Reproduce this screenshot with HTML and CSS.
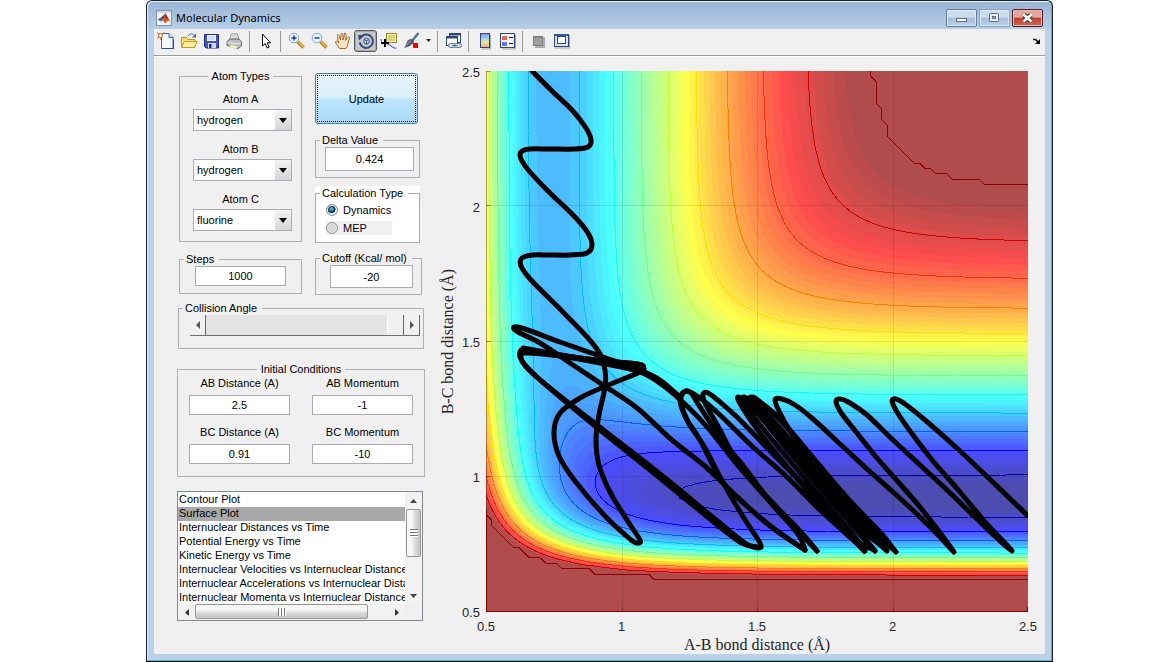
FILE: index.html
```html
<!DOCTYPE html>
<html lang="en">
<head>
<meta charset="utf-8">
<title>Molecular Dynamics</title>
<link rel="stylesheet" href="styles.css">
</head>
<body>
<main class="window">
  <header class="titlebar">
    <svg class="app-icon" viewBox="0 0 16 16" width="16" height="16" aria-hidden="true">
      <rect x=".5" y=".5" width="15" height="15" fill="#eef2f8" stroke="#8a93a3"/>
      <rect x="1" y="1" width="14" height="2" fill="#c9d8ea"/>
      <path d="M1.500 9.500 5 7.500 7 9 5 11.500z" fill="#3c6ea8"/>
      <path d="M5 7.500 9.500 3.500 8.500 8 6.500 9.500z" fill="#5b4a55"/>
      <path d="M9.500 3 14.500 12 12 10.500 9 13.500 7.500 10.500 5 11.500 8 8z" fill="#d9531e"/>
      <path d="M9.500 3 12 9 9.500 8z" fill="#8c2a12"/>
    </svg>
    <h1 class="title">Molecular Dynamics</h1>
    <div class="captions">
      <button class="caption" type="button" aria-label="Minimize"><svg viewBox="0 0 28 16" width="28" height="16"><rect x="9.500" y="8.500" width="10" height="3" fill="#fff" stroke="#5d6b7b"/></svg></button>
      <button class="caption caption-max" type="button" aria-label="Maximize"><svg viewBox="0 0 28 16" width="28" height="16"><rect x="9.500" y="3.500" width="9" height="8" rx="1" fill="#e8eef6" stroke="#5d6b7b"/><rect x="12.500" y="6.500" width="3" height="2" fill="#a9c0dc" stroke="#5d6b7b"/></svg></button>
      <button class="caption caption-close" type="button" aria-label="Close"><svg viewBox="0 0 28 16" width="28" height="16"><path d="M11 5l7 6M18 5l-7 6" stroke="#5e3a42" stroke-width="5"/><path d="M10.500 4.500l8 7M18.500 4.500l-8 7" stroke="#fff" stroke-width="2.600"/></svg></button>
    </div>
  </header>

  <div class="client">
    <nav class="toolbar" aria-label="Figure toolbar">
      <button class="tool" type="button" aria-label="New figure"><svg viewBox="0 0 18 18" width="18" height="18"><path d="M4.500 1.500H12l4 4v11H4.500z" fill="#f2f7ff" stroke="#4a66a0"/><path d="M12 1.500v4h4" fill="#cfdcf2" stroke="#4a66a0"/><path d="M5 16.500h11.500V7" fill="none" stroke="#2f4c86"/><circle cx="3.500" cy="3.500" r="2" fill="#fff2a0" stroke="#e0603a"/><path d="M0 .5l2 1.500M7 .5L5.500 2M0 6l2-1M3.500 6.500v1.500" stroke="#e0603a"/></svg></button>
      <button class="tool" type="button" aria-label="Open"><svg viewBox="0 0 18 18" width="18" height="18"><path d="M1.500 15.500V5.500h5l1.500 2h7v8z" fill="#f4dc7c" stroke="#c79a1c"/><path d="M1.500 15.500l3-6h12.500l-2.500 6z" fill="#fff0a0" stroke="#c79a1c"/><path d="M8 4c2-3 5-2.500 6.500-.5" fill="none" stroke="#4a66a0"/><path d="M16 1.500v4h-4z" fill="#4a66a0"/></svg></button>
      <button class="tool" type="button" aria-label="Save"><svg viewBox="0 0 18 18" width="18" height="18"><path d="M1.500 2.500h14v13.500H3l-1.500-1.500z" fill="#4454c4" stroke="#24307c"/><rect x="4" y="3" width="9" height="6" fill="#f4f7ff"/><path d="M5 5h7M5 7h7" stroke="#b5c2e8"/><rect x="5" y="11" width="8" height="5" fill="#d5d9e4"/><rect x="6" y="12" width="2.500" height="4" fill="#24307c"/></svg></button>
      <button class="tool" type="button" aria-label="Print"><svg viewBox="0 0 18 18" width="18" height="18"><path d="M3.500 8l2-6h6l1.500 6z" fill="#fff" stroke="#8a8a8a"/><path d="M6 4h5M5.500 6h6" stroke="#b5b5b5"/><path d="M1 9.500l3-2.500h9l2.500 3v4l-3.500 2.500-11-3z" fill="#bcbcc0" stroke="#666"/><path d="M1.500 10.500l10.500 1.500 3-2" fill="none" stroke="#eee"/><path d="M4 14l7 1.500" stroke="#f5f5c0" stroke-width="2"/></svg></button>
      <span class="divider"></span>
      <button class="tool" type="button" aria-label="Edit plot"><svg viewBox="0 0 18 18" width="18" height="18"><path d="M5.500 2v12l2.700-2.500 2 4.500 2-1-2-4.200h3.300z" fill="#fff" stroke="#000"/></svg></button>
      <span class="divider"></span>
      <button class="tool" type="button" aria-label="Zoom in"><svg viewBox="0 0 18 18" width="18" height="18"><path d="M9.500 9.500l6 6" stroke="#b77b22" stroke-width="3.500"/><path d="M9.500 9l6 6" stroke="#f2c057" stroke-width="1.500"/><circle cx="6" cy="6" r="4.800" fill="#dff1fa" stroke="#8ea5b8"/><path d="M3.500 6h5M6 3.500v5" stroke="#2340a8" stroke-width="1.500"/></svg></button>
      <button class="tool" type="button" aria-label="Zoom out"><svg viewBox="0 0 18 18" width="18" height="18"><path d="M9.500 9.500l6 6" stroke="#b77b22" stroke-width="3.500"/><path d="M9.500 9l6 6" stroke="#f2c057" stroke-width="1.500"/><circle cx="6" cy="6" r="4.800" fill="#dff1fa" stroke="#8ea5b8"/><path d="M3.500 6h5" stroke="#2340a8" stroke-width="1.500"/></svg></button>
      <button class="tool" type="button" aria-label="Pan"><svg viewBox="0 0 18 18" width="18" height="18"><path d="M5.500 16.500C4 13.500 1.500 11.500 1.500 10c.5-1.500 2-.5 3 .8L3.500 4.500c0-1.500 1.700-1.500 2 0L6.500 8 7 2.500c.2-1.500 2-1.500 2 0V8l1.500-5c.5-1.500 2-1 1.800.5L11.500 8.500l2.300-3c1-1.200 2.400-.3 1.700 1-1.500 3-1.500 7.500-3.500 10z" fill="#ffe3c0" stroke="#a8672c"/><path d="M3 3l1-1M10 1.500l2-.3" stroke="#4a66a0"/></svg></button>
      <button class="tool tool-on" type="button" aria-label="Rotate 3D" aria-pressed="true"><svg viewBox="0 0 18 18" width="18" height="18"><path d="M4.500 4.500a6.700 6.700 0 1 1-1.800 6" fill="none" stroke="#344d80" stroke-width="2"/><path d="M1 3h7L2 8.500z" fill="#344d80"/><path d="M7 7.500l2.500-1.300L12 7.500v3.300l-2.500 1.500L7 10.800zM7 7.500l2.500 1.300L12 7.500M9.500 8.800v3.500" fill="#dfe8f5" stroke="#344d80"/></svg></button>
      <button class="tool" type="button" aria-label="Data cursor"><svg viewBox="0 0 18 18" width="18" height="18"><rect x="6.500" y="1.500" width="10" height="9" fill="#faf4a0" stroke="#8f8a3a"/><path d="M8 4h7M8 6h7M8 8h7" stroke="#b8b050"/><path d="M1 7c1 7 4 4 7 5s5 5 8.500 4" fill="none" stroke="#3038e0"/><path d="M5 7v8M1 11h8" stroke="#000" stroke-width="2"/></svg></button>
      <button class="tool" type="button" aria-label="Brush data"><svg viewBox="0 0 18 18" width="18" height="18"><path d="M15.500 1L9 9" stroke="#5b6f96" stroke-width="2.500"/><path d="M9.500 7.500c2 1 2 2.500.5 4-2.500 3-6 3.500-9 4.500 2.500-2.500 2-6.500 5-8.500 1.500-.8 2.500-.8 3.500 0z" fill="#585c66"/><path d="M4 13c1-2 2-3 4-4" fill="none" stroke="#a9afbb"/><rect x="10" y="11" width="5" height="5" fill="#f00"/></svg></button>
      <button class="tool-drop" type="button" aria-label="Brush options"><svg viewBox="0 0 6 4" width="6" height="4"><path d="M0 0h5L2.500 3z" fill="#222"/></svg></button>
      <span class="divider"></span>
      <button class="tool" type="button" aria-label="Link plot"><svg viewBox="0 0 18 18" width="18" height="18"><rect x="4.500" y="1.500" width="11" height="9" fill="#fff" stroke="#2c467c"/><path d="M4 2.500h12" stroke="#2c467c" stroke-width="2"/><rect x="1.500" y="4.500" width="11" height="9" fill="#fff" stroke="#2c467c"/><path d="M1 5.500h12" stroke="#2c467c" stroke-width="2"/><rect x="3.500" y="11.500" width="7" height="4" rx="2" fill="#d5e3ee" stroke="#5d7890"/><rect x="9.500" y="11.500" width="7" height="4" rx="2" fill="#d5e3ee" stroke="#5d7890"/><path d="M7 13.500h6" stroke="#5d7890"/></svg></button>
      <span class="divider"></span>
      <button class="tool" type="button" aria-label="Insert colorbar"><svg viewBox="0 0 18 18" width="18" height="18"><defs><linearGradient id="bar" x2="0" y2="1"><stop offset="0" stop-color="#9a86e0"/><stop offset=".35" stop-color="#8fd8f0"/><stop offset=".65" stop-color="#f0e890"/><stop offset="1" stop-color="#f09a80"/></linearGradient></defs><path d="M14.500 3v14h-9" fill="none" stroke="#a5a5a5"/><rect x="4.500" y="1.500" width="9" height="14" fill="url(#bar)" stroke="#2c467c"/></svg></button>
      <button class="tool" type="button" aria-label="Insert legend"><svg viewBox="0 0 18 18" width="18" height="18"><path d="M16.500 3v14H3" fill="none" stroke="#a5a5a5"/><rect x="1.500" y="1.500" width="14" height="14" fill="#f4f6fa" stroke="#2c467c"/><rect x="3" y="4" width="5" height="4" fill="#ec6060"/><rect x="3" y="10" width="5" height="4" fill="#6470ec"/><path d="M10 5.500h4M10 11.500h4" stroke="#000"/></svg></button>
      <span class="divider"></span>
      <button class="tool" type="button" aria-label="Hide plot tools"><svg viewBox="0 0 18 18" width="18" height="18"><path d="M14 5v10H5" fill="none" stroke="#adadad" stroke-width="2"/><rect x="3.500" y="4.500" width="9" height="9" fill="#a0a0a0" stroke="#808080"/><path d="M3 5.500h10" stroke="#808080"/></svg></button>
      <button class="tool" type="button" aria-label="Show plot tools"><svg viewBox="0 0 18 18" width="18" height="18"><path d="M16.500 3v13H2" fill="none" stroke="#a5a5a5"/><rect x="1.500" y="2.500" width="14" height="12" fill="#dce3ec" stroke="#2c467c"/><path d="M1 3h15" stroke="#2c5c9c" stroke-width="2"/><rect x="4.500" y="4.500" width="8" height="7" fill="#fff" stroke="#2c467c"/></svg></button>
      <button class="tool-dock" type="button" aria-label="Dock figure"><svg viewBox="0 0 8 7" width="8" height="7"><path d="M0 1.500h2.500l3 3" fill="none" stroke="#000" stroke-width="1.500"/><path d="M7 1v5H2z" fill="#000"/></svg></button>
    </nav>

    <div class="content">
      <form class="controls">
        <div class="pair">
          <div class="stack stack-left">
            <fieldset class="group group-atoms">
              <legend class="legend-center">Atom Types</legend>
              <label class="caption-text" for="atom-a">Atom A</label>
              <span class="combo"><select id="atom-a"><option>hydrogen</option><option>fluorine</option></select></span>
              <label class="caption-text" for="atom-b">Atom B</label>
              <span class="combo"><select id="atom-b"><option>hydrogen</option><option>fluorine</option></select></span>
              <label class="caption-text" for="atom-c">Atom C</label>
              <span class="combo"><select id="atom-c"><option>fluorine</option><option>hydrogen</option></select></span>
            </fieldset>
            <fieldset class="group group-steps">
              <legend>Steps</legend>
              <input class="field" type="text" value="1000" aria-label="Steps">
            </fieldset>
          </div>
          <div class="stack stack-right">
            <button class="update" type="button"><span class="update-face">Update</span></button>
            <fieldset class="group group-delta">
              <legend>Delta Value</legend>
              <input class="field" type="text" value="0.424" aria-label="Delta Value">
            </fieldset>
            <div class="calc">
              <fieldset class="group group-calc">
                <legend>Calculation Type</legend>
                <label class="choice"><input type="radio" name="calc" checked>Dynamics</label>
                <label class="choice choice-shaded"><input type="radio" name="calc">MEP</label>
              </fieldset>
            </div>
            <fieldset class="group group-cutoff">
              <legend>Cutoff (Kcal/ mol)</legend>
              <input class="field" type="text" value="-20" aria-label="Cutoff (Kcal/ mol)">
            </fieldset>
          </div>
        </div>

        <fieldset class="group group-angle">
          <legend>Collision Angle</legend>
          <div class="slider">
            <button class="slider-step" type="button" aria-label="Decrease angle"><svg viewBox="0 0 4 8" width="4" height="8"><path d="M4 0v8L0 4z" fill="#555"/></svg></button>
            <input class="slider-range" type="range" min="0" max="180" value="180" aria-label="Collision Angle">
            <button class="slider-step" type="button" aria-label="Increase angle"><svg viewBox="0 0 4 8" width="4" height="8"><path d="M0 0v8l4-4z" fill="#555"/></svg></button>
          </div>
        </fieldset>

        <fieldset class="group group-initial">
          <legend class="legend-center">Initial Conditions</legend>
          <div class="initial-grid">
            <label class="cell">AB Distance (A)<input class="field" type="text" value="2.5"></label>
            <label class="cell">AB Momentum<input class="field" type="text" value="-1"></label>
            <label class="cell">BC Distance (A)<input class="field" type="text" value="0.91"></label>
            <label class="cell">BC Momentum<input class="field" type="text" value="-10"></label>
          </div>
        </fieldset>

        <div class="listbox">
          <select class="list" size="8" aria-label="Plot type">
            <option>Contour Plot</option>
            <option selected>Surface Plot</option>
            <option>Internuclear Distances vs Time</option>
            <option>Potential Energy vs Time</option>
            <option>Kinetic Energy vs Time</option>
            <option>Internuclear Velocities vs Internuclear Distance</option>
            <option>Internuclear Accelerations vs Internuclear Distance</option>
            <option>Internuclear Momenta vs Internuclear Distance</option>
          </select>
          <div class="scroll scroll-y">
            <span class="scroll-arrow"><svg viewBox="0 0 7 4" width="7" height="4"><path d="M0 4h7L3.500 0z" fill="#444"/></svg></span>
            <span class="thumb thumb-y"></span>
            <span class="scroll-arrow scroll-end"><svg viewBox="0 0 7 4" width="7" height="4"><path d="M0 0h7L3.500 4z" fill="#444"/></svg></span>
          </div>
          <div class="scroll scroll-x">
            <span class="scroll-arrow"><svg viewBox="0 0 4 7" width="4" height="7"><path d="M4 0v7L0 3.500z" fill="#333"/></svg></span>
            <span class="thumb thumb-x"></span>
            <span class="scroll-arrow scroll-end"><svg viewBox="0 0 4 7" width="4" height="7"><path d="M0 0v7l4-3.500z" fill="#333"/></svg></span>
          </div>
        </div>
      </form>

      <figure class="chart">
        <div class="y-title"><span>B-C bond distance (Å)</span></div>
        <div class="y-ticks"><span>2.5</span><span>2</span><span>1.5</span><span>1</span><span>0.5</span></div>
        <div class="plot">
          <canvas class="surface" id="surface" width="542" height="541"></canvas>
          <svg class="lines" id="lines" viewBox="0 0 542 541" preserveAspectRatio="none" aria-label="Potential energy surface with trajectory"></svg>
        </div>
        <div class="x-ticks"><span>0.5</span><span>1</span><span>1.5</span><span>2</span><span>2.5</span></div>
        <figcaption class="x-title">A-B bond distance (Å)</figcaption>
      </figure>
    </div>
  </div>
</main>
<script src="plot.js"></script>
</body>
</html>
```

FILE: styles.css
```css
* { box-sizing: border-box; }

body {
  margin: 0;
  background: #fff;
  color: #000;
  font-family: "Liberation Sans", Arial, sans-serif;
  font-size: 11px;
  line-height: 14px;
}

button, input, select {
  margin: 0;
  font: inherit;
  color: inherit;
}

svg { display: block; }

.window {
  margin: 0 99px 0 146px;
  padding: 0 7px 7px;
  border: 1px solid #15202c;
  border-bottom-color: #000;
  border-radius: 6px 6px 0 0;
  background: linear-gradient(#98b3d3, #b9d1ea 30px);
  box-shadow: inset -1px -1px 0 #2fc4e0, inset 1px 1px 0 #eaf2fb;
}

.titlebar {
  display: flex;
  align-items: center;
  height: 28px;
  padding: 6px 2px 0;
}

.title {
  margin: 0 0 0 4px;
  font-family: "Noto Sans", "Open Sans", sans-serif;
  font-size: 11px;
  font-weight: 400;
  line-height: 16px;
}

.captions {
  display: flex;
  gap: 2px;
  margin-left: auto;
}

.caption {
  width: 31px;
  height: 18px;
  padding: 0;
  border: 1px solid #5f7fa5;
  border-radius: 2px;
  background: linear-gradient(#cbdcee 45%, #a5bfdc 50%, #b7d0ea);
  box-shadow: inset 0 0 0 1px #dce9f6;
}

.caption-max { border-color: #86a4c7; }

.caption-close {
  border-color: #561c26;
  background: linear-gradient(#e2a79c 45%, #c04130 50%, #c96a58);
  box-shadow: inset 0 0 0 1px #e8b9b0;
}

.client { background: #f0f0f0; }

.toolbar {
  display: flex;
  align-items: center;
  height: 27px;
  padding-bottom: 2px;
  border-bottom: 1px solid #9c9c9c;
  box-shadow: 0 1px 0 #fff;
}

.tool, .tool-drop, .tool-dock {
  display: grid;
  place-items: center;
  flex: none;
  width: 23px;
  height: 22px;
  padding: 0;
  border: 0;
  background: none;
}

.tool-on {
  border: 1px solid #5a5a5a;
  border-radius: 3px;
  background: #c8c8c8;
  box-shadow: inset 0 0 0 1px #a8a8a8;
}

.tool-drop { width: 11px; }

.tool-dock {
  width: 17px;
  margin-left: auto;
}

.divider {
  flex: none;
  width: 1px;
  height: 21px;
  margin: 0 4px 0 3px;
  background: #9a9a9a;
}

.content {
  display: flex;
  align-items: flex-start;
}

.controls {
  flex: none;
  width: 248px;
  margin: 13px 0 33px 23px;
}

.pair {
  display: flex;
  justify-content: space-between;
  padding: 0 5px 0 2px;
}

.stack {
  display: flex;
  flex-direction: column;
}

.stack-left { width: 123px; gap: 10px; }
.stack-right { width: 105px; }

.group {
  min-width: 0;
  margin: 0;
  padding: 0;
  border: 1px solid #b0b0b0;
}

.group legend {
  margin-left: 4px;
  padding: 0 5px 0 2px;
  line-height: 14px;
  white-space: nowrap;
}

.group .legend-center {
  margin: 0 auto;
  padding: 0 4px;
}

.group-atoms {
  display: flex;
  flex-direction: column;
  align-items: center;
  height: 173px;
  padding-top: 9px;
}

.caption-text { margin-bottom: 3px; }

.combo {
  position: relative;
  width: 99px;
  height: 22px;
  margin: 0 0 11px 4px;
  border: 1px solid #abadb3;
  background: #fff;
}

.combo::after {
  content: "";
  position: absolute;
  top: 8px;
  right: 4px;
  border: 4px solid transparent;
  border-top: 5px solid #000;
  border-bottom: 0;
  pointer-events: none;
}

.combo select {
  appearance: none;
  width: 100%;
  height: 20px;
  padding: 0 20px 0 3px;
  border: 0;
  border-radius: 0;
  background: linear-gradient(#f4f4f4, #d4d4d4) right / 16px 100% no-repeat #fff;
}

.field {
  display: block;
  width: 100%;
  height: 20px;
  padding: 0;
  border: 1px solid #abadb3;
  background: #fff;
  text-align: center;
}

.group-steps { height: 42px; }

.group-steps .field {
  width: 91px;
  margin: 0 auto;
}

.update {
  width: 103px;
  height: 51px;
  margin: 4px 0 9px;
  padding: 1px;
  border: 1px solid #3c7fb1;
  border-radius: 3px;
  background: linear-gradient(#eaf6fd 0%, #d9f0fc 48%, #bee6fd 50%, #a7d9f5 100%);
}

.update-face {
  display: grid;
  place-items: center;
  height: 100%;
  border: 1px dotted #000;
}

.group-delta { height: 45px; }

.group-delta .field {
  width: 89px;
  height: 24px;
  margin-left: 9px;
}

.calc {
  margin: 8px 0;
  background: #fff;
}

.group-calc { height: 57px; }

.choice {
  display: flex;
  align-items: center;
  gap: 5px;
  width: 66px;
  height: 14px;
  margin: 3px 0 4px 10px;
}

.choice-shaded { background: #f0f0f0; }

.choice input {
  appearance: none;
  width: 12px;
  height: 12px;
  border: 1px solid #8e8f8f;
  border-radius: 50%;
  background: radial-gradient(#e0e0e0, #c8c8c8);
  box-shadow: inset 0 0 0 1px #f4f4f4;
}

.choice input:checked {
  background: radial-gradient(circle at 45% 40%, #7fd3f0 0, #14608c 30%, #0e2c44 48%, #dce4ea 52%);
}

.group-cutoff {
  width: 107px;
  height: 44px;
}

.group-cutoff .field {
  width: 83px;
  height: 23px;
  margin-left: 14px;
}

.group-angle {
  height: 48px;
  margin: 6px 1px 0;
}

.slider {
  display: flex;
  height: 21px;
  margin: 0 3px 0 11px;
  border-bottom: 1px solid #6e6e6e;
}

.slider-step {
  display: grid;
  place-items: center;
  width: 16px;
  padding: 0;
  border: 0;
  border-right: 1px solid #696969;
  background: #f0f0f0;
}

.slider-range {
  appearance: none;
  flex: 1;
  min-width: 0;
  height: 20px;
  background: #e4e4e4;
}

.slider-range::-webkit-slider-thumb {
  appearance: none;
  width: 17px;
  height: 20px;
  border-left: 1px solid #fff;
  border-right: 1px solid #696969;
  background: #f0f0f0;
}

.group-initial {
  height: 115px;
  margin-top: 13px;
  padding: 0 11px;
}

.initial-grid {
  display: grid;
  grid-template-columns: 101px 101px;
  justify-content: space-between;
  row-gap: 10px;
}

.cell {
  display: flex;
  flex-direction: column;
  gap: 5px;
  text-align: center;
}

.listbox {
  display: grid;
  grid-template: 112px 16px / 1fr 17px;
  width: 246px;
  margin-top: 14px;
  border: 1px solid #828790;
  background: #f0f0f0;
}

.list {
  width: 100%;
  min-width: 0;
  height: 112px;
  padding: 1px 0 0;
  border: 0;
  border-radius: 0;
  outline: 0;
  background: #fff;
  overflow: hidden;
}

.list option {
  height: 14px;
  min-height: 14px;
  padding: 0 1px;
  line-height: 14px;
}

.list option:checked {
  background: linear-gradient(#a9a9a9, #a9a9a9);
  color: #000;
}

.scroll {
  display: flex;
  background: #f2f2f2;
}

.scroll-y { flex-direction: column; }

.scroll-arrow {
  display: grid;
  place-items: center;
  width: 17px;
  height: 17px;
}

.scroll-x .scroll-arrow { height: 16px; }
.scroll-end { margin-left: auto; margin-top: auto; }
.scroll-x .scroll-end { margin-top: 0; }

.thumb {
  position: relative;
  border: 1px solid #979797;
  border-radius: 2px;
}

.thumb::after {
  content: "";
  position: absolute;
  inset: 0;
  width: 8px;
  height: 8px;
  margin: auto;
}

.thumb-y {
  width: 15px;
  height: 48px;
  margin-left: 1px;
  background: linear-gradient(90deg, #f6f6f6 40%, #dcdcdc 60%, #c4c4c4);
}

.thumb-y::after { background: repeating-linear-gradient(#777 0 1px, #fff 1px 3px); }

.thumb-x {
  width: 173px;
  height: 15px;
  background: linear-gradient(#f6f6f6 40%, #dcdcdc 60%, #c4c4c4);
}

.thumb-x::after { background: repeating-linear-gradient(90deg, #777 0 1px, #fff 1px 3px); }

.chart {
  flex: 1;
  display: grid;
  grid-template-columns: 20px 28px 1fr;
  min-width: 0;
  margin: 15px 17px 0 13px;
  color: #262626;
}

.y-title {
  display: grid;
  place-items: center;
}

.y-title span {
  writing-mode: vertical-rl;
  transform: rotate(180deg);
}

.y-title span, .x-title {
  font-family: "Liberation Serif", "Times New Roman", serif;
  font-size: 16px;
  line-height: 18px;
  white-space: nowrap;
}

.y-ticks {
  display: flex;
  flex-direction: column;
  justify-content: space-between;
  align-items: flex-end;
  margin: -5px 0 -8px;
  padding-right: 6px;
  font-size: 13px;
}

.plot {
  display: grid;
  min-width: 0;
}

.surface, .lines {
  grid-area: 1 / 1;
  display: block;
  width: 100%;
  height: 541px;
}

.x-ticks {
  grid-column: 3;
  display: flex;
  justify-content: space-between;
  margin: 8px -15px 0;
  font-size: 13px;
}

.x-ticks span {
  width: 30px;
  text-align: center;
}

.x-title {
  grid-column: 3;
  margin-top: 2px;
  text-align: center;
}
```

FILE: plot.js
```js
// LEPS potential for collinear H-H-F, energies in kcal/mol, distances in angstrom.
const HH = { depth: 109.46, beta: 1.942, eq: 0.7417, sato: 0.2 };
const HF = { depth: 141.2, beta: 2.22, eq: 0.9215, sato: 0.17 };
const CUTOFF = -22;
const FLOOR = -141.2;
const LEVEL_STEP = 10.45;
const W = 542, H = 541, MIN = 0.5, MAX = 2.5;

function pairTerms(pair, r) {
  const e = Math.exp(-pair.beta * (r - pair.eq)), s = pair.sato;
  const k = pair.depth / (4 * (1 + s));
  return [
    k * ((3 + s) * e * e - (2 + 6 * s) * e),
    k * ((1 + 3 * s) * e * e - (6 + 2 * s) * e)
  ];
}

function energy(x, y) {
  const [qa, a] = pairTerms(HH, x);
  const [qb, b] = pairTerms(HF, y);
  const [qc, c] = pairTerms(HF, x + y);
  const exchange = Math.sqrt(((a - b) ** 2 + (b - c) ** 2 + (c - a) ** 2) / 2);
  return Math.min(CUTOFF, qa + qb + qc - exchange);
}

// 64-step jet colour map
const ramp = i => i < 0 || i > 46 ? 0 : i < 16 ? (i + 1) / 16 : i < 31 ? 1 : (47 - i) / 16;
function jet(v) {
  const t = (v - FLOOR) / (CUTOFF - FLOOR);
  const i = Math.max(1, Math.min(63, Math.floor(t * 64) + 1));
  return [ramp(i - 25), ramp(i - 9), ramp(i + 7)].map(c => c * 255);
}

function drawSurface() {
  const ctx = document.getElementById("surface").getContext("2d");
  const img = ctx.createImageData(W, H);
  for (let j = 0; j < H; j++) {
    const y = MAX - (MAX - MIN) * j / (H - 1);
    for (let i = 0; i < W; i++) {
      const x = MIN + (MAX - MIN) * i / (W - 1);
      const c = jet(energy(x, y));
      const p = 4 * (j * W + i);
      for (let k = 0; k < 3; k++) img.data[p + k] = 0.7 * c[k] + 76.5;
      img.data[p + 3] = 255;
    }
  }
  ctx.putImageData(img, 0, 0);
}

const svg = document.getElementById("lines");
function addPath(d, attrs) {
  const el = document.createElementNS("http://www.w3.org/2000/svg", "path");
  el.setAttribute("d", d);
  el.setAttribute("fill", "none");
  for (const k in attrs) el.setAttribute(k, attrs[k]);
  svg.appendChild(el);
}

// Marching squares over a regular mesh
function drawContours() {
  const n = 100, step = (MAX - MIN) / n, grid = [];
  for (let j = 0; j <= n; j++) {
    grid.push([]);
    for (let i = 0; i <= n; i++) grid[j].push(energy(MIN + i * step, MIN + j * step));
  }
  const sx = W / n, sy = H / n;
  for (let k = 0; k < 12; k++) {
    const level = CUTOFF - LEVEL_STEP * k;
    let d = "";
    for (let j = 0; j < n; j++) for (let i = 0; i < n; i++) {
      const cs = [[i, j], [i + 1, j], [i + 1, j + 1], [i, j + 1]];
      const pts = [];
      for (let e = 0; e < 4; e++) {
        const p = cs[e], q = cs[(e + 1) % 4];
        const a = grid[p[1]][p[0]], b = grid[q[1]][q[0]];
        if ((a >= level) !== (b >= level)) {
          const t = (level - a) / (b - a);
          pts.push([(p[0] + t * (q[0] - p[0])) * sx, H - (p[1] + t * (q[1] - p[1])) * sy]);
        }
      }
      for (let m = 0; m + 1 < pts.length; m += 2)
        d += `M${pts[m].map(v => v.toFixed(1))}L${pts[m + 1].map(v => v.toFixed(1))}`;
    }
    addPath(d, { stroke: `rgb(${jet(level).map(Math.round)})`, "stroke-width": 1, "shape-rendering": "crispEdges" });
  }
}

function drawAxes() {
  let grid = "", ticks = "";
  for (const f of [0.25, 0.5, 0.75]) {
    const x = Math.round(W * f) + 0.5, y = Math.round(H * f) - 0.5;
    grid += `M${x} 0V${H}M0 ${y}H${W}`;
    ticks += `M${x} ${H}v-5M0 ${y}h5`;
  }
  addPath(grid, { stroke: "#000", "stroke-opacity": 0.1 });
  addPath(ticks + `M.5 0V${H}M0 .5h5`, { stroke: "#402000", "stroke-opacity": 0.4 });
  addPath(`M0 ${H - 0.5}H${W}M.5 ${H}V440M${W - 0.5} ${H}v-5`, { stroke: "#800000" });
}

const trajectory = [
  [1027,515, 1000,489, 960,451, 925,420, 905,404, 896,399, 892,401, 897,412, 910,431, 933,461, 960,492, 985,522, 1004,542, 1012,551,
   1000,541, 975,517, 947,490, 920,465, 893,440, 867,415, 850,403, 840,399, 836,402, 842,414, 857,433, 877,458, 900,484, 920,507, 938,530, 954,552,
   940,537, 920,517, 893,492, 867,469, 840,444, 813,419, 795,405, 782,399, 775,400, 780,413, 790,431, 803,449, 820,471, 845,501, 870,528, 888,543, 896,552],
  [895,551, 875,533, 840,492, 805,449, 775,415, 753,398, 751,401, 762,418, 795,459, 830,500, 860,533, 875,551],
  [887,551, 865,530, 825,484, 785,434, 760,406, 753,397, 757,408, 790,447, 825,490, 855,525, 886,549],
  [895,551, 880,532, 850,501, 815,460, 780,419, 755,398],
  [886,550, 855,519, 820,477, 790,440, 760,409, 744,397, 745,405, 765,431, 795,467, 825,502, 855,537, 865,551],
  [875,551, 850,523, 815,481, 780,439, 750,406, 738,397, 742,407, 760,433, 790,470, 820,505, 850,537, 874,550],
  [864,551, 843,526, 803,484, 770,451, 740,420, 720,402, 708,393, 703,394, 705,403, 720,430, 735,458, 763,493, 790,522, 817,551],
  [817,551, 800,531, 767,497, 745,468, 720,437, 700,407, 690,392, 683,393, 681,402, 688,422, 705,448, 720,477, 742,515, 760,543, 758,548, 745,543, 715,519, 660,474, 610,435, 570,404, 537,377, 522,361, 520,352, 527,350, 565,356, 603,361, 638,364, 643,368, 638,371],
  [864,551, 853,540, 820,510, 787,477, 753,447, 720,415, 700,398, 686,391, 680,400, 686,418, 700,440, 720,478, 738,498, 768,524, 790,540, 805,550],
  [805,550, 798,534, 770,502, 740,468, 708,428, 688,407, 665,387, 640,372, 600,363, 560,356, 525,353, 521,357, 528,369, 560,397, 600,430, 650,470, 705,515, 740,542, 757,547],
  [680,397, 660,380, 640,370, 603,357, 560,342, 525,329, 514,327, 518,332, 540,343, 573,365, 603,385, 637,408, 672,440, 707,468, 735,495, 770,526, 805,550],
  [532,71, 552,91, 572,110, 586,128, 591,140, 588,147, 575,149, 550,149, 530,149, 521,152, 521,159, 530,172, 550,193, 570,212, 586,230, 592,244, 587,253, 570,255, 550,255, 533,255, 522,258, 521,266, 531,280, 560,309, 588,338, 600,354, 605,370, 605,387, 599,415, 596,440, 599,465, 610,492, 627,520, 640,540, 637,543, 630,539, 605,516, 575,481, 559,456, 554,432, 560,413, 580,398, 606,386, 640,372, 643,367, 636,364, 580,358, 523,348]
];

function smooth(flat) {
  const p = [];
  for (let i = 0; i < flat.length; i += 2) p.push([flat[i] - 486, flat[i + 1] - 71]);
  let d = `M${p[0]}`;
  for (let i = 0; i + 1 < p.length; i++) {
    const a = p[Math.max(0, i - 1)], b = p[i], c = p[i + 1], e = p[Math.min(p.length - 1, i + 2)];
    d += `C${b[0] + (c[0] - a[0]) / 6},${b[1] + (c[1] - a[1]) / 6} ${c[0] - (e[0] - b[0]) / 6},${c[1] - (e[1] - b[1]) / 6} ${c}`;
  }
  return d;
}

drawSurface();
drawContours();
drawAxes();
for (const run of trajectory)
  addPath(smooth(run), { stroke: "#000", "stroke-width": 5, "stroke-linejoin": "round", "stroke-linecap": "round" });
```
